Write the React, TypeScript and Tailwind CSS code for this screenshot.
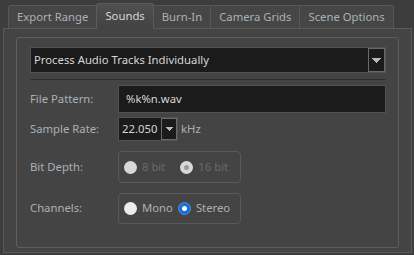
import React, { useState } from 'react';

const tabs = ['Export Range', 'Sounds', 'Burn-In', 'Camera Grids', 'Scene Options'];

const Arrow = () => (
  <svg width="9" height="5" viewBox="0 0 9 5">
    <path d="M0 0h9v1H0zM1 1h7v1H1zM2 2h5v1H2zM3 3h3v1H3zM4 4h1v1H4z" fill="#b8b8b8" />
  </svg>
);

const Radio = ({ checked, disabled }: { checked?: boolean; disabled?: boolean }) => {
  if (checked && !disabled) {
    return (
      <span className="w-[13px] h-[13px] rounded-full bg-[#1a6fd0] border border-[#4d8fe0] flex items-center justify-center">
        <span className="w-[5px] h-[5px] rounded-full bg-white" />
      </span>
    );
  }
  return (
    <span
      className={`w-[13px] h-[13px] rounded-full flex items-center justify-center ${
        disabled ? 'bg-[#d8d8d8]' : 'bg-[#ececec]'
      }`}
    >
      {checked && <span className="w-[5px] h-[5px] rounded-full bg-[#9a9a9a]" />}
    </span>
  );
};

export default function App() {
  const [active] = useState(1);
  const [channels, setChannels] = useState('stereo');

  return (
    <div
      className="w-[414px] h-[255px] bg-[#3d3d3d] text-[11.3px] overflow-hidden"
      style={{ fontFamily: '"Noto Sans", "Open Sans", sans-serif' }}
    >
      <div className="flex items-end pl-[8px] h-[28px] relative z-10">
        {tabs.map((t, i) =>
          i === active ? (
            <div
              key={t}
              className="h-[26px] px-[8px] -mb-[1px] flex items-center border border-b-0 border-[#5c5c5c] rounded-t-[3px] bg-gradient-to-b from-[#505050] to-[#424242] text-[#d6d6d6]"
            >
              {t}
            </div>
          ) : (
            <div
              key={t}
              className={`h-[23px] px-[8px] flex items-center border-t border-[#575757] bg-[#464646] text-[#a9b1b8] ${
                i === 0 ? 'border-l rounded-tl-[3px]' : ''
              } ${i === tabs.length - 1 ? 'border-r rounded-tr-[3px]' : 'border-r'} ${
                i === active - 1 ? 'border-r-0' : ''
              }`}
            >
              {t}
            </div>
          )
        )}
      </div>

      <div className="ml-[3px] w-[409px] h-[225px] border border-[#5a5a5a] bg-[#444444] pt-[8px] px-[12px]">
        <div className="h-[211px] border border-[#5e5e5e] rounded-[3px] pl-[13px] pr-[12px] pt-[9px]">
          <div className="flex h-[26px] bg-[#1b1b1b] border border-[#525252]">
            <div className="flex-1 flex items-center pl-[3px] text-[#d6d6d6]">
              Process Audio Tracks Individually
            </div>
            <div className="w-[17px] border border-[#6a6a6a] flex items-center justify-center">
              <Arrow />
            </div>
          </div>

          <div className="mt-[6px] h-[1px] bg-[#2e2e2e]" />

          <div className="mt-[5px] flex items-center">
            <div className="w-[88px] text-[#a9b1b8]">File Pattern:</div>
            <div className="flex-1 h-[28px] bg-[#1b1b1b] border border-[#525252] flex items-center pl-[7px] text-[#d6d6d6]">
              %k%n.wav
            </div>
          </div>

          <div className="mt-[4px] flex items-center">
            <div className="w-[88px] text-[#a9b1b8]">Sample Rate:</div>
            <div className="flex h-[24px] w-[60px] bg-[#1b1b1b] border border-[#525252]">
              <div className="flex-1 flex items-center pl-[3px] text-[#d6d6d6]">22.050</div>
              <div className="w-[16px] border border-[#6a6a6a] flex items-center justify-center">
                <svg width="7" height="4" viewBox="0 0 7 4">
                  <path d="M0 0h7v1H0zM1 1h5v1H1zM2 2h3v1H2zM3 3h1v1H3z" fill="#b8b8b8" />
                </svg>
              </div>
            </div>
            <div className="ml-[3px] text-[#a9b1b8]">kHz</div>
          </div>

          <div className="mt-[10px] flex items-center">
            <div className="w-[88px] text-[#a9b1b8]">Bit Depth:</div>
            <div className="h-[32px] w-[123px] border border-[#595959] rounded-[4px] flex items-center pl-[5px] gap-[5px]">
              <Radio disabled />
              <span className="text-[#6a6a6a]">8 bit</span>
              <span className="ml-[10px]">
                <Radio disabled checked />
              </span>
              <span className="text-[#6a6a6a]">16 bit</span>
            </div>
          </div>

          <div className="mt-[10px] flex items-center">
            <div className="w-[88px] text-[#a9b1b8]">Channels:</div>
            <div className="h-[31px] w-[123px] border border-[#595959] rounded-[4px] flex items-center pl-[5px]">
              <button className="flex items-center gap-[5px]" onClick={() => setChannels('mono')}>
                <Radio checked={channels === 'mono'} />
                <span className="text-[#a9b1b8]">Mono</span>
              </button>
              <button className="flex items-center gap-[5px] ml-[5px]" onClick={() => setChannels('stereo')}>
                <Radio checked={channels === 'stereo'} />
                <span className="text-[#a9b1b8]">Stereo</span>
              </button>
            </div>
          </div>
        </div>
      </div>
    </div>
  );
}
